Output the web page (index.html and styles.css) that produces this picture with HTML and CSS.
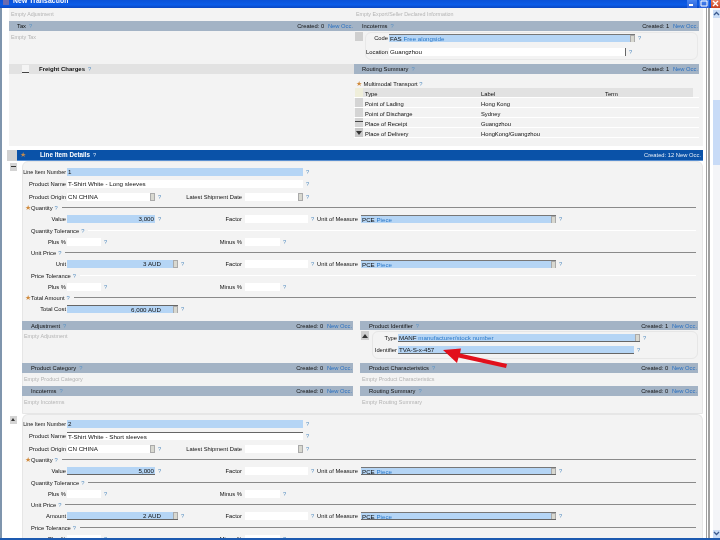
FILE: index.html
```html
<!DOCTYPE html>
<html lang="en">
<head>
<meta charset="utf-8">
<title>New Transaction</title>
<link rel="stylesheet" href="styles.css">
</head>
<body>
<div class="window">
  <header class="titlebar">
    <span class="app-icon"></span>
    <span class="title-text">New Transaction</span>
    <span class="win-btns">
      <span class="win-btn">
        <svg width="10" height="8" viewBox="0 0 10 8"><rect x="2" y="4" width="4" height="2" fill="#fff"/></svg>
      </span>
      <span class="win-btn">
        <svg width="10" height="8" viewBox="0 0 10 8"><path d="M2 1h6v5H2z" fill="none" stroke="#fff"/></svg>
      </span>
      <span class="win-btn close">
        <svg width="9" height="8" viewBox="0 0 9 8"><path d="M2 1l5 5M7 1L2 6" stroke="#fff" stroke-width="1.4"/></svg>
      </span>
    </span>
  </header>

  <div class="frame">
    <div class="frame-left"></div>
    <main class="main">
      <section class="top">
        <div class="top-col">
          <div class="empty-first">Empty Adjustment</div>
          <div class="hdr"><span class="hdr-title"><span class="hdr-ind">Tax</span> <i>?</i></span><span class="hdr-right">Created: 0 <b>New Occ.</b></span></div>
          <div class="empty-body tall">Empty Tax</div>
          <div class="hdr light"><span class="hdr-title"><span class="dash-btn"></span><strong>Freight Charges</strong> <i>?</i></span></div>
          <div class="top-fill"></div>
        </div>
        <div class="top-col">
          <div class="empty-first">Empty Export/Seller Declared Information</div>
          <div class="hdr"><span class="hdr-title"><span class="hdr-ind">Incoterms</span> <i>?</i></span><span class="hdr-right">Created: 1 <b>New Occ.</b></span></div>
          <div class="inco">
            <span class="grey-btn"></span>
            <div class="inco-card">
              <div class="row rc"><label class="lb lb-inco">Code</label><span class="sel blue-in w246">FAS <em>Free alongside</em><u></u></span><i>?</i></div>
              <div class="row rc"><label class="lb lb-inco">Location</label><span class="inp white-in w237">Guangzhou</span><i>?</i></div>
            </div>
          </div>
          <div class="hdr"><span class="hdr-title"><span class="hdr-ind">Routing Summary</span> <i>?</i></span><span class="hdr-right">Created: 1 <b>New Occ.</b></span></div>
          <div class="routing">
            <div class="multi"><span class="star">★</span> Multimodal Transport <i>?</i></div>
            <div class="tr th"><span class="tc0 yellow"></span><span class="tc1">Type</span><span class="tc2">Label</span><span class="tc3">Term</span></div>
            <div class="tr"><span class="tc0"></span><span class="tc1">Point of Lading</span><span class="tc2">Hong Kong</span></div>
            <div class="tr"><span class="tc0"></span><span class="tc1">Point of Discharge</span><span class="tc2">Sydney</span></div>
            <div class="tr"><span class="tc0 dash"></span><span class="tc1">Place of Receipt</span><span class="tc2">Guangzhou</span></div>
            <div class="tr"><span class="tc0 down"></span><span class="tc1">Place of Delivery</span><span class="tc2">HongKong/Guangzhou</span></div>
          </div>
        </div>
      </section>

      <section class="item">
        <div class="item-bar">
          <span class="strip"></span>
          <span class="item-bar-main"><span class="item-title"><span class="star">★</span><strong>Line Item Details</strong> <i class="white-q">?</i></span><span class="item-right">Created: 12 New Occ.</span></span>
        </div>
        <div class="item-wrap">
          <div class="side"><span class="side-btn minus"></span></div>
          <div class="card">
            <div class="row r-num"><label class="lb">Line Item Number</label><span class="inp blue-in w236">1</span><i>?</i></div>
            <div class="row r-name"><label class="lb">Product Name</label><span class="inp white-in w236">T-Shirt White - Long sleeves</span><i>?</i></div>
            <div class="row r-org"><label class="lb">Product Origin</label><span class="sel white-in w88">CN CHINA<u></u></span><i>?</i><label class="lb lb-mid">Latest Shipment Date</label><span class="sel white-in w58"><u></u></span><i>?</i></div>
            <div class="legend"><span class="star">★</span>Quantity <i>?</i><span class="rule"></span></div>
            <div class="row r-val"><label class="lb">Value</label><span class="inp blue-in num w88">3,000</span><i>?</i><label class="lb lb-mid">Factor</label><span class="inp white-in w63"></span><i>?</i><label class="lb lb-uom">Unit of Measure</label><span class="sel blue-in w195">PCE <em>Piece</em><u></u></span><i>?</i></div>
            <div class="legend"><span class="ind"></span>Quantity Tolerance <i>?</i><span class="rule soft"></span></div>
            <div class="row r-tol"><label class="lb">Plus %</label><span class="inp white-in w34"></span><i>?</i><label class="lb lb-minus">Minus %</label><span class="inp white-in w35"></span><i>?</i></div>
            <div class="legend"><span class="ind"></span>Unit Price <i>?</i><span class="rule"></span></div>
            <div class="row r-val"><label class="lb">Unit</label><span class="sel blue-in num w111">3 AUD<u></u></span><i>?</i><label class="lb lb-mid2">Factor</label><span class="inp white-in w63"></span><i>?</i><label class="lb lb-uom">Unit of Measure</label><span class="sel blue-in w195">PCE <em>Piece</em><u></u></span><i>?</i></div>
            <div class="legend"><span class="ind"></span>Price Tolerance <i>?</i><span class="rule soft"></span></div>
            <div class="row r-tol"><label class="lb">Plus %</label><span class="inp white-in w34"></span><i>?</i><label class="lb lb-minus">Minus %</label><span class="inp white-in w35"></span><i>?</i></div>
            <div class="legend"><span class="star">★</span>Total Amount <i>?</i><span class="rule"></span></div>
            <div class="row r-val"><label class="lb">Total Cost</label><span class="sel blue-in num w111 top-line">6,000 AUD<u></u></span><i>?</i></div>

            <div class="subgrid">
              <div class="sub-col">
                <div class="hdr h9"><span class="hdr-title"><span class="hdr-ind">Adjustment</span> <i>?</i></span><span class="hdr-right">Created: 0 <b>New Occ.</b></span></div>
                <div class="empty-body sb1">Empty Adjustment</div>
                <div class="hdr"><span class="hdr-title"><span class="hdr-ind">Product Category</span> <i>?</i></span><span class="hdr-right">Created: 0 <b>New Occ.</b></span></div>
                <div class="empty-body sb2">Empty Product Category</div>
                <div class="hdr"><span class="hdr-title"><span class="hdr-ind">Incoterms</span> <i>?</i></span><span class="hdr-right">Created: 0 <b>New Occ.</b></span></div>
                <div class="empty-body sb3">Empty Incoterms</div>
              </div>
              <div class="sub-col">
                <div class="hdr h9"><span class="hdr-title"><span class="hdr-ind">Product Identifier</span> <i>?</i></span><span class="hdr-right">Created: 1 <b>New Occ.</b></span></div>
                <div class="ident sb1">
                  <span class="grey-btn up"></span>
                  <div class="ident-card">
                    <div class="row id-row"><label class="lb lb-id">Type</label><span class="sel blue-in w242">MANF <em>manufacturer/stock number</em><u></u></span><i>?</i></div>
                    <div class="row id-row"><label class="lb lb-id">Identifier</label><span class="inp blue-in w236 under">TVA-S-x-457</span><i>?</i></div>
                  </div>
                </div>
                <div class="hdr"><span class="hdr-title"><span class="hdr-ind">Product Characteristics</span> <i>?</i></span><span class="hdr-right">Created: 0 <b>New Occ.</b></span></div>
                <div class="empty-body sb2">Empty Product Characteristics</div>
                <div class="hdr"><span class="hdr-title"><span class="hdr-ind">Routing Summary</span> <i>?</i></span><span class="hdr-right">Created: 0 <b>New Occ.</b></span></div>
                <div class="empty-body sb3">Empty Routing Summary</div>
              </div>
            </div>
          </div>
        </div>
        <div class="item-wrap">
          <div class="side"><span class="side-btn up"></span></div>
          <div class="card second">
            <div class="row r-num"><label class="lb">Line Item Number</label><span class="inp blue-in w236">2</span><i>?</i></div>
            <div class="row r-name"><label class="lb">Product Name</label><span class="inp white-in w236 top-line">T-Shirt White - Short sleeves</span><i>?</i></div>
            <div class="row r-org"><label class="lb">Product Origin</label><span class="sel white-in w88">CN CHINA<u></u></span><i>?</i><label class="lb lb-mid">Latest Shipment Date</label><span class="sel white-in w58"><u></u></span><i>?</i></div>
            <div class="legend"><span class="star">★</span>Quantity <i>?</i><span class="rule"></span></div>
            <div class="row r-val"><label class="lb">Value</label><span class="inp blue-in num w88 under">5,000</span><i>?</i><label class="lb lb-mid">Factor</label><span class="inp white-in w63"></span><i>?</i><label class="lb lb-uom">Unit of Measure</label><span class="sel blue-in w195 under">PCE <em>Piece</em><u></u></span><i>?</i></div>
            <div class="legend"><span class="ind"></span>Quantity Tolerance <i>?</i><span class="rule"></span></div>
            <div class="row r-tol"><label class="lb">Plus %</label><span class="inp white-in w34"></span><i>?</i><label class="lb lb-minus">Minus %</label><span class="inp white-in w35"></span><i>?</i></div>
            <div class="legend"><span class="ind"></span>Unit Price <i>?</i><span class="rule"></span></div>
            <div class="row r-val"><label class="lb">Amount</label><span class="sel blue-in num w111 under">2 AUD<u></u></span><i>?</i><label class="lb lb-mid2">Factor</label><span class="inp white-in w63"></span><i>?</i><label class="lb lb-uom">Unit of Measure</label><span class="sel blue-in w195 under">PCE <em>Piece</em><u></u></span><i>?</i></div>
            <div class="legend"><span class="ind"></span>Price Tolerance <i>?</i><span class="rule"></span></div>
            <div class="row r-tol"><label class="lb">Plus %</label><span class="inp white-in w34"></span><i>?</i><label class="lb lb-minus">Minus %</label><span class="inp white-in w35"></span><i>?</i></div>
          </div>
        </div>
      </section>
    </main>
    <aside class="chrome-right">
      <span class="vline"></span>
      <span class="vline thick"></span>
      <div class="scrollbar">
        <span class="sb-btn">
          <svg width="7" height="7" viewBox="0 0 7 7"><path d="M1 5l2.500-2.500L6 5" fill="none" stroke="#3a5a90" stroke-width="1.3"/></svg>
        </span>
        <span class="sb-thumb"></span>
        <span class="sb-btn down">
          <svg width="7" height="7" viewBox="0 0 7 7"><path d="M1 2l2.500 2.500L6 2" fill="none" stroke="#3a5a90" stroke-width="1.3"/></svg>
        </span>
      </div>
    </aside>
  </div>
  <div class="taskbar"></div>

  <svg class="arrow" width="70" height="24" viewBox="0 0 70 24">
    <path d="M66 19L19 8.500l1-5L2 5l14 13 1.500-5.500L65 23z" fill="#e2101c"/>
  </svg>
</div>
</body>
</html>
```

FILE: styles.css
```css
* { box-sizing: border-box; }
html, body { margin: 0; padding: 0; background: #fff; }
.window {
  position: relative;
  width: 720px;
  height: 540px;
  overflow: hidden;
  display: flex;
  flex-direction: column;
  background: #fff;
  font: 5.8px/10px "Liberation Sans", Arial, sans-serif;
  color: #111;
  filter: blur(0.4px);
}
i { font-style: normal; color: #5d93c4; }
em { font-style: normal; color: #2a78c8; }
.titlebar {
  flex: 0 0 8px;
  height: 8px;
  display: flex;
  align-items: flex-start;
  overflow: hidden;
  background: linear-gradient(#0a52d8, #0b5ce8 60%, #0a46c0);
  color: #fff;
}
.app-icon { width: 6px; height: 5px; margin: 0 4px 0 3px; background: #6a6ab0; }
.title-text { font-size: 6.8px; font-weight: bold; line-height: 2px; letter-spacing: 0.1px; }
.win-btns { margin-left: auto; display: flex; gap: 1px; }
.win-btn { width: 10px; height: 8px; margin-left: 1px; background: linear-gradient(#4a86f0, #2a60d8); display: block; }
.win-btn svg { display: block; }
.win-btn.close { width: 9px; background: linear-gradient(#e88060, #c84020); }
.frame { flex: 1 1 auto; min-height: 0; display: flex; }
.frame-left { flex: 0 0 2px; background: #7f95ad; }
.main { flex: 0 0 701px; width: 701px; overflow: hidden; }
.chrome-right { flex: 1 1 auto; display: flex; background: #fff; padding-left: 3px; }
.vline { width: 1px; background: #a0a0a0; margin-right: 1px; }
.vline.thick { width: 2px; margin-right: 3px; }
.scrollbar { flex: 1; display: flex; flex-direction: column; background: #f4f5f8; padding-top: 2px; }
.sb-btn { height: 8px; background: #c9dcf6; display: block; }
.sb-btn svg { display: block; }
.sb-thumb { height: 65px; margin-top: 82px; background: #c8dbf7; }
.sb-btn.down { margin-top: auto; }
.taskbar { flex: 0 0 2px; background: #1d5ab0; }

.top { margin-left: 7px; display: grid; grid-template-columns: 345px 345px; height: 138px; background: #f3f3f3; }
.top-col { display: flex; flex-direction: column; }
.empty-first { height: 13px; padding: 1px 0 0 2px; color: #b4b4b4; font-size: 5.3px; }
.hdr { height: 10px; display: flex; justify-content: space-between; align-items: center; background: #a3b3c5; padding-right: 1px; }
.hdr.h9 { height: 9px; }
.hdr.light { background: #e2e2e2; }
.hdr-title { display: flex; gap: 3px; align-items: center; white-space: nowrap; }
.hdr-ind { padding-left: 8px; }
.hdr-right { white-space: nowrap; }
.hdr-right b { font-weight: normal; color: #2a70c0; margin-left: 2px; }
.dash-btn { width: 7px; height: 9px; margin-left: 13px; margin-right: 7px; background: linear-gradient(#f4f4f4 80%, #444 80%, #444 90%, #f4f4f4 90%); }
.hdr strong { font-size: 6px; }
.empty-body { color: #b4b4b4; padding: 1px 0 0 2px; font-size: 5.4px; }
.tall { height: 33px; }
.top-fill { flex: 1; }

.inco { height: 33px; display: flex; }
.grey-btn { flex: 0 0 8px; height: 9px; margin: 1px 0 0 1px; background: #cfcfcf; }
.inco-card { flex: 1; height: 28px; margin: 1px 1px 0 2px; border: 1px solid #e8e8e8; border-radius: 6px; }
.rc { height: 10px; }
.rc + .rc { margin-top: 4px; }
.routing { flex: 1; }
.multi { height: 14px; padding: 5px 0 0 2px; }
.tr { height: 10px; display: flex; border-bottom: 1px solid #fff; line-height: 12px; }
.tr.th .tc1, .tr.th .tc2, .tr.th .tc3 { background: #e2e2e2; }
.tc0 { flex: 0 0 8px; margin-left: 1px; background: #d4d4d4; }
.tc0.yellow { background: #efeeda; }
.tc0.dash { background: linear-gradient(#d4d4d4 30%, #444 30%, #444 45%, #d4d4d4 45%); }
.tc0.down { background: #c8c8c8; position: relative; }
.tc0.down::after { content: ""; position: absolute; left: 1px; top: 3px; border: 3px solid transparent; border-top: 4px solid #333; }
.tc1 { flex: 0 0 118px; padding-left: 2px; }
.tc2 { flex: 0 0 124px; }
.tc3 { flex: 0 0 88px; }

.item { margin-left: 5px; margin-top: 4px; }
.item-bar { height: 11px; display: flex; }
.strip { flex: 0 0 10px; background: #d2d2d2; }
.item-bar-main { flex: 1; display: flex; justify-content: space-between; align-items: center; background: #0a52a8; border-bottom: 1px solid #5a8fd0; color: #fff; padding-right: 2px; }
.item-title { display: flex; align-items: center; gap: 3px; }
.item-title .star { color: #c08a50; width: 6px; margin: 0 11px 0 3px; }
.item-title strong { font-size: 6.3px; }
.white-q { color: #cfe0f4; }
.item-right { color: #e6eef8; }
.item-wrap { display: flex; }
.side { flex: 0 0 15px; padding: 2px 0 0 3px; }
.side-btn { display: block; width: 7px; height: 8px; background: #d4d4d4; position: relative; }
.side-btn.minus::after { content: ""; position: absolute; left: 1px; right: 1px; top: 3px; height: 1px; background: #333; }
.side-btn.up::after { content: ""; position: absolute; left: 1px; top: 0; border: 2.500px solid transparent; border-bottom: 3px solid #333; }
.card { flex: 1; background: #f3f3f3; border: 1px solid #e6e6e6; border-radius: 6px 6px 0 0; height: 253px; padding-top: 3px; }
.card.second { height: 200px; border-bottom: 0; padding-top: 2px; }
.row { display: flex; align-items: center; white-space: nowrap; }
.row > i { flex: 0 0 4px; margin-left: 3px; }
.lb { flex: 0 0 43px; width: 43px; text-align: right; margin-right: 1px; }
.r-num .lb { font-size: 5.4px; }
.inp, .sel { display: block; height: 8px; line-height: 8px; position: relative; padding-left: 1px; overflow: hidden; color: #111; font-size: 6.2px; }
.sel u { position: absolute; right: 0; top: 0; width: 5px; height: 8px; background: #d8d8d0; border: 1px solid #aaa; text-decoration: none; }
.blue-in { background: #b5d5f5; }
.white-in { background: #fff; }
.num { text-align: right; padding-right: 1px; }
.sel.num { padding-right: 17px; }
.under { border-bottom: 1px solid #666; }
.top-line { border-top: 1px solid #666; }
.w236 { width: 236px; }
.w237 { width: 237px; border-right: 1px solid #666; }
.w242 { width: 242px; border-bottom: 1px solid #666; }
.w246 { width: 246px; border-top: 1px solid #777; }
.w88 { width: 88px; }
.w58 { width: 58px; }
.w63 { width: 63px; }
.w195 { width: 195px; border-top: 1px solid #777; }
.w111 { width: 111px; }
.w34 { width: 34px; }
.w35 { width: 35px; }
.r-num { height: 13px; }
.r-name { height: 12px; }
.r-org { height: 13px; }
.r-val { height: 14px; }
.r-tol { height: 13px; }
.lb-mid { flex: 0 0 80px; width: 80px; margin-right: 3px; }
.lb-mid2 { flex: 0 0 57px; width: 57px; margin-right: 3px; }
.lb-uom { flex: 0 0 43px; width: 43px; margin-right: 3px; }
.lb-minus { flex: 0 0 134px; width: 134px; margin-right: 3px; }
.lb-inco { flex: 0 0 22px; width: 22px; }
.legend { height: 9px; display: flex; align-items: center; padding-left: 2px; gap: 2px; white-space: nowrap; }
.star { color: #d08a3c; font-size: 7px; }
.legend .star { flex: 0 0 4px; width: 4px; }
.legend .ind { flex: 0 0 4px; width: 4px; }
.rule { flex: 1; height: 1px; background: #8a8a8a; margin: 0 6px 0 2px; }
.rule.soft { background: #fff; }
.subgrid { display: grid; grid-template-columns: 331px 338px; gap: 7px; margin: 5px 0 0 -1px; }
.sub-col { display: flex; flex-direction: column; }
.subgrid .hdr-ind { padding-left: 9px; }
.sb1 { height: 33px; }
.sb2 { height: 13px; }
.sb3 { height: 17px; }
.ident { display: flex; }
.ident-card { flex: 1; height: 28px; margin: 1px 0 0 3px; border: 1px solid #e6e6e6; border-radius: 6px; }
.id-row { height: 12px; }
.lb-id { flex: 0 0 24px; width: 24px; }
.grey-btn.up { position: relative; }
.grey-btn.up::after { content: ""; position: absolute; left: 1px; top: 0; border: 3px solid transparent; border-bottom: 4px solid #333; }
.arrow { position: absolute; left: 441px; top: 345px; }
```
